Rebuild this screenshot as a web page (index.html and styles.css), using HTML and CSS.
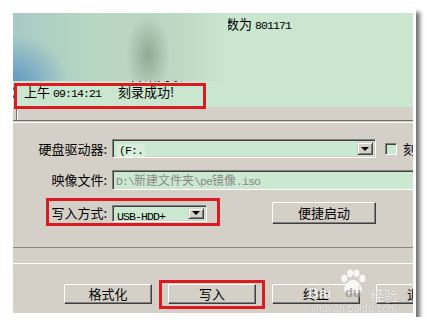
FILE: index.html
```html
<!DOCTYPE html>
<html lang="zh-CN">
<head>
    <meta charset="UTF-8">
    <title>写入硬盘映像</title>
    <link rel="stylesheet" href="styles.css">
</head>
<body>
<div class="shot">
    <div class="win">
        <div class="log">
            <div class="blur"></div>
            <p class="line first">数为 <span class="mono">801171</span></p>
            <p class="line"></p>
            <p class="line"></p>
            <p class="line">上<span class="gap"></span>开始刻录</p>
            <p class="line"><span class="dot"></span>上午 <span class="mono">09:14:21</span><span class="msg">刻录成功!</span></p>
        </div>
        <div class="frame"></div>
        <div class="sep"></div>

        <div class="form">
            <div class="label">硬盘驱动器:</div>
            <div class="field">
                <div class="combo drive"><span class="val"><span class="mono sel">(F:.</span></span><span class="drop"></span></div>
                <span class="check"></span>
                <span class="check-text">刻录校验</span>
            </div>

            <div class="label">映像文件:</div>
            <div class="field">
                <div class="input"><span class="mono">D:\</span>新建文件夹<span class="mono">\pe</span>镜像<span class="mono">.iso</span></div>
            </div>

            <div class="label">写入方式:</div>
            <div class="field">
                <div class="combo mode"><span class="val"><span class="mono">USB-HDD+</span></span><span class="drop"></span></div>
                <span class="btn quick">便捷启动</span>
            </div>
        </div>

        <div class="lines"></div>

        <div class="buttons">
            <span class="btn">格式化</span>
            <span class="btn">写入</span>
            <span class="btn">终止</span>
            <span class="btn">退出</span>
        </div>

        <!-- annotation boxes -->
        <div class="mark m1"></div>
        <div class="mark m2"></div>
        <div class="mark m3"></div>

        <!-- watermark -->
        <div class="wm">
            <span class="wm-bai">Bai</span>
            <svg class="wm-paw" width="28" height="26" viewBox="0 0 24 22">
                <ellipse cx="4.5" cy="8" rx="2.6" ry="3.2" />
                <ellipse cx="9.5" cy="3.5" rx="2.6" ry="3.2" />
                <ellipse cx="15" cy="3.5" rx="2.6" ry="3.2" />
                <ellipse cx="20" cy="8" rx="2.6" ry="3.2" />
                <path d="M12 9 C8 9 3.5 15 4.5 18.5 C5.5 21.5 10 20.5 12 20 C14 20.5 18.5 21.5 19.5 18.5 C20.5 15 16 9 12 9 Z" />
            </svg>
            <span class="wm-du">du</span>
            <span class="wm-jy">经验</span>
            <span class="wm-url">jingyan.baidu.com</span>
        </div>
    </div>
</div>
</body>
</html>
```

FILE: styles.css
```css
*{margin: 0; padding: 0; box-sizing: border-box;}
body{
    background: #fff;
    font-family: "Noto Sans CJK SC", sans-serif;
    font-size: 13px;
    color: #000;
}
.shot{
    margin: 8px 0 0 8px;
    width: 408px;
    height: 309px;
    padding: 5px;
    background: #fff;
    box-shadow: 4px 4px 4px rgba(0, 0, 0, 0.55);
}
.win{
    position: relative;
    width: 400px;
    height: 300px;
    overflow: hidden;
    background: #d4d0c8;
}
.mono{
    font-family: "Liberation Mono", monospace;
    font-size: 11.5px;
    letter-spacing: -0.9px;
}

/* log area */
.log{
    position: relative;
    height: 94px;
    padding-top: 2px;
    background: #cbe6cf;
}
.line{
    height: 17px;
    line-height: 17px;
    padding-left: 11px;
    white-space: nowrap;
}
.line.first{padding-left: 213px;}
.msg{margin-left: 17px;}
.gap{
    display: inline-block;
    width: 94px;
}
.dot{
    display: inline-block;
    width: 11px;
    height: 11px;
    margin: 0 7px 0 -18px;
    border: 2px solid #2457c8;
    border-radius: 50%;
    vertical-align: -1px;
}
.blur{
    position: absolute;
    z-index: 1;
    left: 0;
    top: 0;
    width: 215px;
    height: 68px;
    background:
        radial-gradient(ellipse 22px 40px at 135px 42px, rgba(140, 165, 145, 0.9), rgba(140, 165, 145, 0)),
        radial-gradient(ellipse 55px 45px at 0 68px, rgba(95, 150, 195, 0.95), rgba(95, 150, 195, 0)),
        linear-gradient(to right, #a6cbc6, #b9d6c2 40%, #bcd7c3 75%, #cbe6cf);
}
.frame{
    height: 13px;
    margin-left: 3px;
    border-left: 1px solid #6f6d68;
    box-shadow: inset 1px 0 #fff;
}
.sep{
    height: 3px;
    border-top: 1px solid #6f6d68;
    border-bottom: 1px solid #fff;
}

/* form */
.form{
    display: grid;
    grid-template-columns: 94px auto;
    column-gap: 5px;
    row-gap: 12px;
    padding-top: 16px;
    align-items: center;
}
.label{
    text-align: right;
    line-height: 16px;
    white-space: nowrap;
}
.field{
    display: flex;
    align-items: center;
    white-space: nowrap;
}
.combo{
    display: flex;
    flex-shrink: 0;
    padding: 2px;
    background: #cbe8d0;
    border: 1px solid;
    border-color: #808080 #fff #fff #808080;
    box-shadow: inset 1px 1px #404040, inset -1px -1px #d4d0c8;
}
.combo .val{
    flex: 1;
    padding-left: 2px;
    line-height: 13px;
}
.combo.drive{width: 264px; height: 19px;}
.combo.mode{width: 95px; height: 17px;}
.sel{
    display: inline-block;
    padding: 0 2px;
    background: #d8eedb;
}
.drop{
    display: flex;
    align-items: center;
    justify-content: center;
    width: 16px;
    background: #d4d0c8;
    border: 1px solid;
    border-color: #d4d0c8 #404040 #404040 #d4d0c8;
    box-shadow: inset 1px 1px #fff, inset -1px -1px #808080;
}
.drop::after{
    content: "";
    border-left: 4px solid transparent;
    border-right: 4px solid transparent;
    border-top: 4px solid #000;
}
.check{
    flex-shrink: 0;
    width: 12px;
    height: 12px;
    margin-left: 9px;
    background: #cbe8d0;
    border: 1px solid;
    border-color: #808080 #fff #fff #808080;
    box-shadow: inset 1px 1px #404040;
}
.check-text{margin-left: 6px;}
.input{
    flex-shrink: 0;
    width: 320px;
    height: 20px;
    padding: 0 3px;
    line-height: 17px;
    font-size: 12px;
    color: #8a8a8a;
    background: #cbe8d0;
    border: 1px solid;
    border-color: #808080 #fff #fff #808080;
    box-shadow: inset 1px 1px #404040;
    white-space: nowrap;
}

/* buttons */
.btn{
    display: block;
    flex-shrink: 0;
    width: 88px;
    height: 20px;
    line-height: 18px;
    text-align: center;
    background: #d4d0c8;
    border: 1px solid;
    border-color: #fff #404040 #404040 #fff;
    box-shadow: inset -1px -1px #808080;
}
.btn.quick{
    width: 104px;
    height: 22px;
    line-height: 20px;
    margin-left: 65px;
}
.lines{
    height: 17px;
    margin-top: 23px;
    border-top: 1px solid #8a8884;
    border-bottom: 1px solid #fff;
}
.buttons{
    display: flex;
    gap: 16px;
    margin-top: 20px;
    padding-left: 51px;
}

/* red annotation boxes */
.mark{
    position: absolute;
    z-index: 2;
    border: 3px solid #dc1a22;
}
.m1{left: 1px; top: 70px; width: 192px; height: 26px;}
.m2{left: 33px; top: 185px; width: 174px; height: 28px;}
.m3{left: 146px; top: 267px; width: 106px; height: 29px;}

/* watermark */
.wm{
    color: rgba(255, 255, 255, 0.85);
    text-shadow: 0 0 1px rgba(0, 0, 0, 0.3);
}
.wm span, .wm svg{position: absolute;}
.wm-bai{
    left: 295px;
    top: 271px;
    font: bold 15px "Liberation Sans", sans-serif;
}
.wm-paw{
    left: 326px;
    top: 256px;
    fill: rgba(255, 255, 255, 0.85);
}
.wm-du{
    left: 332px;
    top: 272px;
    font: bold 13px "Liberation Sans", sans-serif;
    color: rgba(150, 150, 150, 0.8);
    text-shadow: none;
}
.wm-jy{
    left: 357px;
    top: 272px;
    font-size: 14px;
}
.wm-url{
    left: 298px;
    top: 290px;
    font: 10px "Liberation Sans", sans-serif;
    letter-spacing: 0.3px;
}
```
